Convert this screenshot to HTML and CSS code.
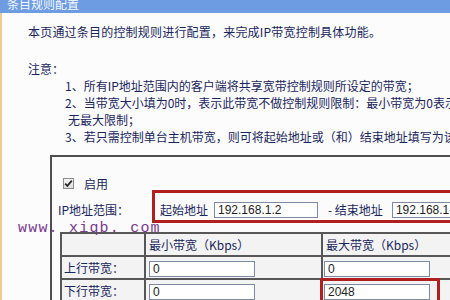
FILE: index.html
```html
<!DOCTYPE html>
<html>
<head>
    <meta charset="utf-8">
    <title>条目规则配置</title>
    <link rel="stylesheet" href="styles.css">
</head>
<body>
    <div class="titlebar"><span>条目规则配置</span></div>

    <div class="page">
        <div class="intro">本页通过条目的控制规则进行配置，来完成IP带宽控制具体功能。</div>

        <div class="note">注意：</div>
        <div class="items">
            <div>1、所有IP地址范围内的客户端将共享宽带控制规则所设定的带宽；</div>
            <div>2、当带宽大小填为0时，表示此带宽不做控制规则限制：最小带宽为0表示无最小限制，最大带宽为0表示</div>
            <div class="cont">无最大限制；</div>
            <div>3、若只需控制单台主机带宽，则可将起始地址或（和）结束地址填写为该主机的IP地址。</div>
        </div>

        <div class="panel">
            <div class="enable">
                <span class="check">
                    <svg width="9" height="9" viewBox="0 0 9 9"><path d="M1.2 4.6 L3.4 6.9 L7.8 1.6" fill="none" stroke="#2b2b2b" stroke-width="1.8"/></svg>
                </span>
                <span>启用</span>
            </div>

            <div class="iprow">
                <span class="iplabel">IP地址范围：</span>
                <div class="hl">
                    <span>起始地址</span>
                    <input class="field ip" type="text" value="192.168.1.2">
                    <span class="sep">- 结束地址</span>
                    <input class="field ip" type="text" value="192.168.1.254">
                </div>
            </div>

            <table class="bw">
                <tr class="head">
                    <td class="name"></td>
                    <td class="col">最小带宽（Kbps）</td>
                    <td class="col">最大带宽（Kbps）</td>
                </tr>
                <tr>
                    <td class="name">上行带宽：</td>
                    <td><input class="field" type="text" value="0"></td>
                    <td class="last"><input class="field" type="text" value="0"></td>
                </tr>
                <tr>
                    <td class="name">下行带宽：</td>
                    <td><input class="field" type="text" value="0"></td>
                    <td class="last"><input class="field" type="text" value="2048"><span class="mark"></span></td>
                </tr>
            </table>
        </div>
    </div>

    <div class="watermark">www. xiqb. com</div>
</body>
</html>
```

FILE: styles.css
```css
body {
    margin: 0;
    width: 450px;
    height: 300px;
    overflow: hidden;
    position: relative;
    background: #fcfcfc;
    font-family: "Noto Sans CJK SC", "Noto Sans", sans-serif;
    font-size: 12px;
    color: #1a255c;
    white-space: nowrap;
}
.titlebar {
    height: 13px;
    overflow: hidden;
    background: #6d9ce2;
    color: #f4f8ff;
    padding-left: 7px;
}
.titlebar span {
    display: block;
    line-height: 12px;
    margin-top: -2px;
}
.page {
    border-left: 2px solid #f1cb96;
    padding-left: 26px;
    height: 287px;
}
.intro {
    line-height: 17px;
    padding-top: 10px;
    letter-spacing: 0.2px;
}
.note {
    line-height: 17px;
    margin-top: 20px;
}
.items {
    padding-left: 37px;
    line-height: 17px;
}
.items .cont {
    padding-left: 3px;
}
.panel {
    margin-top: 10px;
    margin-left: 22px;
    width: 520px;
    height: 200px;
    border: 2px solid #4e4e4e;
    border-right: none;
    padding-left: 6px;
    background: #fbfbfb;
}
.enable {
    display: flex;
    align-items: center;
    height: 14px;
    margin-top: 19px;
    padding-left: 5px;
    gap: 10px;
}
.check {
    width: 11px;
    height: 11px;
    box-sizing: border-box;
    border: 1px solid #8d8d8d;
    background: linear-gradient(#f6f6f6, #dcdcdc);
    display: flex;
    align-items: center;
    justify-content: center;
}
.iprow {
    display: flex;
    align-items: baseline;
}
.iplabel {
    width: 94px;
}
.hl {
    display: flex;
    align-items: center;
    border: 3px solid #b0201f;
    padding: 8px 0 2px 5px;
    width: 400px;
}
.field {
    font-family: "Liberation Sans", Arial, sans-serif;
    font-size: 12px;
    color: #222;
    height: 16px;
    box-sizing: border-box;
    border: 1px solid #7d8aa3;
    background: #fff;
    padding: 0 3px;
    margin: 0;
    width: 106px;
}
.ip {
    margin-left: 6px;
    width: 104px;
}
.sep {
    margin-left: 10px;
    margin-right: 3px;
}
.bw {
    margin-top: 9px;
    margin-left: 2px;
    border-collapse: collapse;
    background: #f3f3f3;
}
.bw td {
    border: 2px solid #575757;
    height: 21px;
    padding: 0 0 0 3px;
}
.bw td.name {
    width: 80px;
    padding-left: 2px;
}
.bw td.col {
    width: 172px;
}
.bw td.last {
    position: relative;
    padding-left: 1px;
}
.mark {
    position: absolute;
    left: -3px;
    top: -2px;
    width: 114px;
    height: 30px;
    border: 3px solid #b0201f;
}
.watermark {
    position: absolute;
    z-index: 5;
    left: 18px;
    top: 220px;
    font-family: "Liberation Mono", "Courier New", monospace;
    font-size: 15px;
    letter-spacing: 1.2px;
    color: #7a3a8c;
}
```
